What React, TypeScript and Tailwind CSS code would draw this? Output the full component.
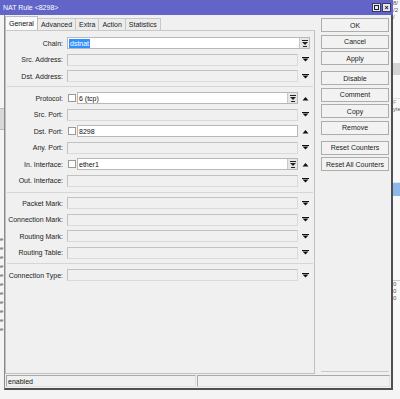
import React from "react";

type Kind = "gray" | "white";

interface RowProps {
  label: string;
  kind: Kind;
  value?: string;
  check?: boolean;
  combo?: boolean;
  up?: boolean;
}

function DownArrow() {
  return (
    <svg width="7" height="5" viewBox="0 0 7 5">
      <path d="M0 0.5h7" stroke="#111" strokeWidth="1" />
      <path d="M0.5 1.5h6L3.5 4.5z" fill="#111" />
    </svg>
  );
}

function UpArrow() {
  return (
    <svg width="7" height="5" viewBox="0 0 7 5">
      <path d="M0.5 4.5h6L3.5 1z" fill="#111" />
    </svg>
  );
}

function ComboIcon() {
  return (
    <svg width="6" height="7" viewBox="0 0 6 7">
      <path d="M0 0.5h6" stroke="#222" strokeWidth="1" />
      <path d="M0 2h6L3 5z" fill="#222" />
      <path d="M1 6.5h4" stroke="#222" strokeWidth="1" />
    </svg>
  );
}

function ComboButton() {
  return (
    <div className="w-[10px] h-full flex items-center justify-center bg-[#e6e6e6] border-l border-[#c8c8c8]">
      <ComboIcon />
    </div>
  );
}

function Row({ label, kind, value, check, combo, up }: RowProps) {
  return (
    <div className="flex items-center h-[12px]">
      <div className="w-[58px] text-right text-[7px] text-[#222] leading-none pr-[1px]">
        {label}
      </div>
      <div className="flex-1 ml-[3px] flex items-center h-full">
        {check && (
          <div className="w-[8px] h-[8px] ml-[1px] mr-[1px] bg-white border border-[#9a9a9a]" />
        )}
        {kind === "gray" ? (
          <div className="flex-1 h-full bg-[#f0f0f0] border border-[#c2c2c2] border-b-[#dadada] border-r-[#dadada]" />
        ) : (
          <div className="flex-1 h-full bg-white border border-[#b8b8b8] flex items-center">
            <span className="flex-1 pl-[1px] text-[7px] leading-none text-[#111]">
              {value}
            </span>
            {combo && <ComboButton />}
          </div>
        )}
      </div>
      <div className="w-[14px] flex items-center justify-center">
        {up ? <UpArrow /> : <DownArrow />}
      </div>
      <div className="w-[2px]" />
    </div>
  );
}

function Btn({ children }: { children: React.ReactNode }) {
  return (
    <div className="h-[14px] flex items-center justify-center bg-[#f2f2f2] border border-[#adadad] text-[7px] text-[#222] leading-none">
      {children}
    </div>
  );
}

const tabs = ["General", "Advanced", "Extra", "Action", "Statistics"];

export default function App() {
  return (
    <div className="w-[400px] h-[399px] overflow-hidden bg-[#f6f6f6] flex flex-col font-['Liberation_Sans',Arial,sans-serif]">
      <div className="flex h-[390px]">
        {/* Window */}
        <div className="w-[393px] flex flex-col">
          {/* Title bar */}
          <div className="h-[15px] bg-[#6264c8] flex items-center justify-between pl-[3px] pr-[2px]">
            <span className="text-white text-[7px] leading-none">NAT Rule &lt;8298&gt;</span>
            <div className="flex gap-[1px]">
              <div className="w-[9px] h-[9px] bg-[#e8e8ef] border border-[#3a3a6a] flex items-center justify-center">
                <div className="w-[5px] h-[5px] border border-[#222]" />
              </div>
              <div className="w-[9px] h-[9px] bg-[#e8e8ef] border border-[#3a3a6a] flex items-center justify-center text-[7px] font-bold text-[#111] leading-none">
                ×
              </div>
            </div>
          </div>

          <div className="flex-1 flex">
            {/* desktop strip left of window body */}
            <div className="w-[4px] flex flex-col bg-[#f4f4f4]">
              <div className="h-[93px]" />
              <div className="h-[22px] bg-[#d8d8d8] border-y border-[#bbb]" />
              <div className="h-[105px]" />
              <div className="flex flex-col text-[6px] leading-[9px] text-[#444] overflow-hidden">
                {Array.from({ length: 11 }).map((_, i) => (
                  <span key={i}>e</span>
                ))}
              </div>
            </div>

            {/* Window body */}
            <div className="flex-1 flex flex-col bg-[#f0f0f0] border-l border-[#8a8a8a] border-r-2 border-r-[#505050] border-b-2 border-b-[#505050]">
              <div className="flex-1 flex">
                {/* Tabs + panel */}
                <div className="w-[310px] flex flex-col">
                  <div className="h-[15px] flex items-end pt-[1px]">
                    {tabs.map((t, i) => (
                      <div
                        key={t}
                        className={
                          i === 0
                            ? "h-[14px] px-[3px] flex items-center bg-[#fafafa] border border-b-0 border-[#bcbcbc] text-[7px] leading-none text-[#111]"
                            : "h-[12px] px-[3px] flex items-center bg-[#ececec] border border-l-0 border-b-0 border-[#c8c8c8] text-[7px] leading-none text-[#222]"
                        }
                      >
                        {t}
                      </div>
                    ))}
                  </div>
                  <div className="flex-1 border border-[#c0c0c0] border-t-[#c8c8c8] bg-[#f0f0f0] flex flex-col">
                    <div className="flex flex-col gap-[4.5px] pt-[6px] pb-[4px]">
                      <div className="flex items-center h-[12px]">
                        <div className="w-[58px] text-right text-[7px] text-[#222] leading-none pr-[1px]">
                          Chain:
                        </div>
                        <div className="flex-1 ml-[3px] mr-[4px] h-full bg-white border border-[#b8b8b8] flex items-center">
                          <div className="flex-1 pl-[1px] flex items-center">
                            <span className="bg-[#3391ff] text-white text-[7px] leading-[9px] px-[1px]">dstnat</span>
                          </div>
                          <ComboButton />
                        </div>
                      </div>
                      <Row label="Src. Address:" kind="gray" />
                      <Row label="Dst. Address:" kind="gray" />
                    </div>
                    <div className="border-t border-[#d6d6d6] mx-[1px]" />
                    <div className="flex flex-col gap-[4.5px] pt-[5px] pb-[5px]">
                      <Row label="Protocol:" kind="white" check combo up value="6 (tcp)" />
                      <Row label="Src. Port:" kind="gray" />
                      <Row label="Dst. Port:" kind="white" check up value="8298" />
                      <Row label="Any. Port:" kind="gray" />
                      <Row label="In. Interface:" kind="white" check combo up value="ether1" />
                      <Row label="Out. Interface:" kind="gray" />
                    </div>
                    <div className="border-t border-[#d6d6d6] mx-[1px]" />
                    <div className="flex flex-col gap-[4.5px] pt-[4.5px] pb-[4.5px]">
                      <Row label="Packet Mark:" kind="gray" />
                      <Row label="Connection Mark:" kind="gray" />
                      <Row label="Routing Mark:" kind="gray" />
                      <Row label="Routing Table:" kind="gray" />
                    </div>
                    <div className="border-t border-[#d6d6d6] mx-[1px]" />
                    <div className="flex flex-col pt-[5px]">
                      <Row label="Connection Type:" kind="gray" />
                    </div>
                  </div>
                </div>

                {/* Buttons column */}
                <div className="flex-1 flex flex-col pl-[6px] pr-[2px] pt-[3px] pb-[2px]">
                  <div className="flex-1 flex flex-col border-b border-[#c8c8c8]">
                    <div className="flex flex-col gap-[2.5px]">
                      <Btn>OK</Btn>
                      <Btn>Cancel</Btn>
                      <Btn>Apply</Btn>
                    </div>
                    <div className="flex flex-col gap-[2.5px] mt-[6px]">
                      <Btn>Disable</Btn>
                      <Btn>Comment</Btn>
                      <Btn>Copy</Btn>
                      <Btn>Remove</Btn>
                    </div>
                    <div className="flex flex-col gap-[2.5px] mt-[6px]">
                      <Btn>Reset Counters</Btn>
                      <Btn>Reset All Counters</Btn>
                    </div>
                  </div>
                </div>
              </div>

              {/* Status bar */}
              <div className="h-[14px] flex px-[1px] pt-[1px] pb-[1px] gap-[1px]">
                <div className="w-[190px] h-full border border-[#a8a8a8] border-b-[#e0e0e0] border-r-[#e0e0e0] flex items-center pl-[1px] text-[7px] leading-none text-[#111]">
                  enabled
                </div>
                <div className="flex-1 h-full border border-[#a8a8a8] border-b-[#e0e0e0] border-r-[#e0e0e0]" />
              </div>
            </div>
          </div>
        </div>

        {/* desktop strip right of window */}
        <div className="flex-1 flex flex-col bg-[#f8f8f8] text-[6px] leading-[7px] text-[#555] overflow-hidden">
          <span>8/</span>
          <span>/2</span>
          <span>/</span>
          <div className="h-[42px]" />
          <div className="h-[12px] bg-[#d4d4d4]" />
          <div className="h-[24px] border-b border-[#e0e0e0]" />
          <span className="text-[#999]">F</span>
          <span>yte</span>
          <div className="h-[70px] border-b border-[#e4e4e4]" />
          <div className="h-[13px] bg-[#8db9ea]" />
          <div className="h-[85px] border-b border-[#cccccc]" />
          <span>0</span>
          <span>0</span>
          <span>0</span>
        </div>
      </div>
      <div className="flex-1 bg-[#f4f4f4]" />
    </div>
  );
}
